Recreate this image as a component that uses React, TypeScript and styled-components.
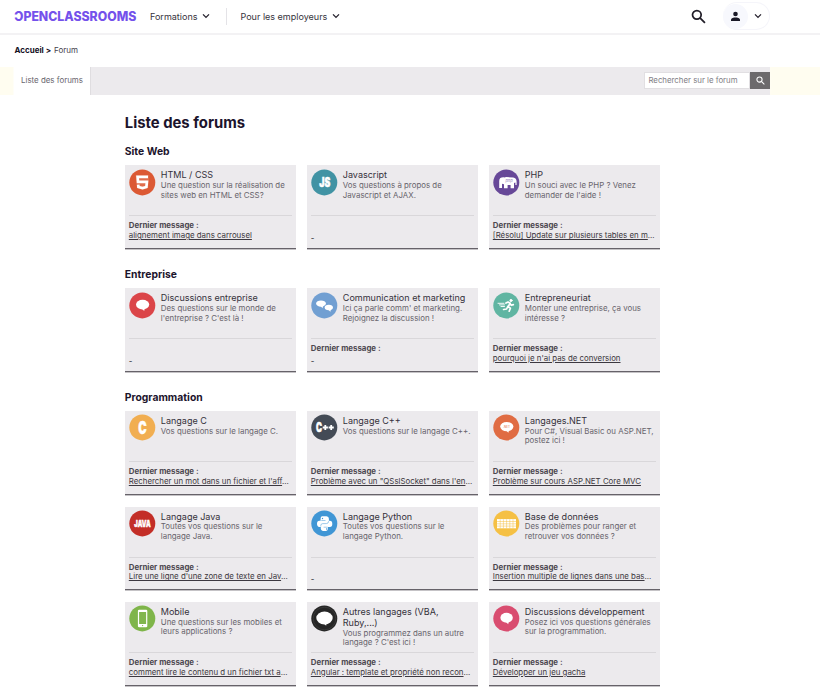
import React from "react";
import styled, { createGlobalStyle } from "styled-components";

const GlobalStyle = createGlobalStyle`
  * { box-sizing: border-box; }
  body { margin: 0; background: #fff; font-family: Inter, "Liberation Sans", sans-serif; color: #35313d; }
  h1, h2, h3, p { margin: 0; }
`;

const Page = styled.div`
  width: 820px;
  height: 699px;
  overflow: hidden;
`;

const Header = styled.header`
  display: flex;
  align-items: center;
  height: 35px;
  padding: 0 50px 1px 14px;
  border-bottom: 2px solid #f3f2f4;
`;

const NavItem = styled.div`
  display: flex;
  align-items: center;
  gap: 4.5px;
  font-size: 9.02px;
  line-height: 15px;
  color: #36333c;
  white-space: nowrap;
`;

const Divider = styled.span`
  width: 1px;
  height: 17px;
  margin: 0 13.5px 0 16px;
  background: #e4e3e7;
`;

const Logo = styled.svg`
  width: 123px;
  height: 18px;
  margin-right: 13px;
  flex: none;
  overflow: visible;
`;

const HeaderActions = styled.div`
  display: flex;
  align-items: center;
  gap: 17px;
  margin-left: auto;
`;

const Account = styled.div`
  display: flex;
  align-items: center;
  gap: 6px;
  width: 47px;
  height: 28px;
  border: 1px solid #f5f5fa;
  border-left: 0;
  border-radius: 14px;
`;

const Avatar = styled.span`
  display: flex;
  align-items: center;
  justify-content: center;
  width: 25px;
  height: 25px;
  border-radius: 50%;
  background: #f7f8fd;
`;

const Breadcrumb = styled.nav`
  display: flex;
  gap: 3px;
  height: 31.5px;
  padding: 9px 0 0 14.5px;
  font-size: 8px;
  line-height: 13px;
  color: #45414c;
  b { color: #15101f; font-weight: 700; }
`;

const Strip = styled.div`
  display: flex;
  height: 28.5px;
  padding: 0 50px 0 13px;
  background: linear-gradient(90deg, #fffdf0 13px, #fff 14px, #fff 760px, #fffdf0 772px);
`;

const ForumTab = styled.div`
  display: flex;
  align-items: center;
  width: 76.5px;
  padding: 0 0 2px 8px;
  font-size: 7.92px;
  color: #69656e;
  white-space: nowrap;
`;

const SearchBar = styled.div`
  display: flex;
  flex: 1;
  align-items: center;
  justify-content: flex-end;
  background: #eceaed;
  border-left: 1px solid #dfdde0;
`;

const SearchInput = styled.div`
  width: 106px;
  height: 17px;
  padding-left: 3.4px;
  border: 1px solid #e1dfe2;
  background: #fff;
  font-size: 7.83px;
  line-height: 15px;
  color: #817e85;
`;

const SearchButton = styled.div`
  display: flex;
  align-items: center;
  justify-content: center;
  width: 20px;
  height: 17px;
  background: #6c6a6c;
`;

const Content = styled.main`
  width: 536px;
  margin-left: 124.8px;
  padding-top: 18.6px;
`;

const PageTitle = styled.h1`
  height: 27.5px;
  font-size: 14.85px;
  line-height: 19px;
  font-weight: 700;
  color: #1c142c;
`;

const Section = styled.section`
  padding-top: 4px;
  margin-bottom: 14.9px;
`;

const SectionTitle = styled.h2`
  height: 20.4px;
  font-size: 10.35px;
  line-height: 13px;
  font-weight: 700;
  color: #1c142c;
`;

const Cards = styled.div`
  display: grid;
  grid-template-columns: repeat(3, 171px);
  column-gap: 11px;
  row-gap: 12px;
`;

const Card = styled.article`
  height: 83.5px;
  padding: 4px 4px 0;
  display: flex;
  flex-direction: column;
  background: #eceaed;
  border-bottom: 1.5px solid #666269;
  box-shadow: 0 0.5px 0 #8b888d;
`;

const CardTop = styled.div`
  display: flex;
  gap: 5px;
  height: 47px;
  border-bottom: 1px solid #d9d7da;
`;

const CardText = styled.div`
  padding-top: 1px;
  white-space: nowrap;
`;

const CardTitle = styled.h3`
  font-size: 9.02px;
  line-height: 10.8px;
  font-weight: 400;
  color: #35313b;
`;

const Description = styled.p`
  font-size: 7.88px;
  line-height: 9.6px;
  color: #68646c;
`;

const Latest = styled.div<{ $labelled: boolean }>`
  padding-top: ${(p) => (p.$labelled ? "5px" : "14.6px")};
  font-size: 7.87px;
  line-height: 9.7px;
  white-space: nowrap;
  color: #3c3840;
`;

const LatestLabel = styled.div`
  font-weight: 700;
  color: #4c4850;
`;

const Topic = styled.span`
  text-decoration: underline;
  text-underline-offset: 1px;
`;

const NoTopic = styled.div`
  padding-top: 3px;
  color: #17131d;
`;

const Badge = styled.svg`
  width: 27px;
  height: 27px;
  margin-top: -0.6px;
  flex: none;
  overflow: visible;
`;

const Chevron = () => (
  <svg width="8" height="6" viewBox="0 0 8 6" fill="none" stroke="#24202c" strokeWidth="1.3">
    <path d="M1 1.4 4 4.4 7 1.4" />
  </svg>
);

const Magnifier = ({ size, color }: { size: number; color: string }) => (
  <svg width={size} height={size} viewBox="0 0 18 18" fill="none" stroke={color} strokeWidth="2.1">
    <circle cx="7" cy="7" r="5.2" />
    <path d="m10.7 10.7 6 6" />
  </svg>
);

type Kind =
  | "html" | "js" | "php" | "bubble" | "bubbles" | "runner" | "c" | "cpp"
  | "net" | "java" | "python" | "table" | "phone" | "largeBubble" | "smallBubble";

const Lettering = ({ text, x, width, size, y }: { text: string; x: number; width: number; size: number; y: number }) => (
  <text x={x} y={y} fill="#fff" stroke="#fff" strokeWidth=".5" fontSize={size} fontWeight="900" textLength={width} lengthAdjust="spacingAndGlyphs">
    {text}
  </text>
);

const Bubble = ({ cx, cy, rx, ry }: { cx: number; cy: number; rx: number; ry: number }) => (
  <g fill="#fff">
    <ellipse cx={cx} cy={cy} rx={rx} ry={ry} />
    <path d={`M${cx - 0.4} ${cy + ry - 0.6}l2 2 .5-2.6z`} />
  </g>
);

const glyphs: Record<Kind, React.ReactNode> = {
  html: (
    <g>
      <path d="m6.6 6 1.2 13 5.7 2.1 5.7-2.1L20.4 6z" fill="#fff" opacity=".12" />
      <path d="M19 7.8H8.6l.4 5h8.9l-.5 5.2-3.9 1.1-4.1-1.1-.2-2.3" fill="none" stroke="#fff" strokeWidth="2.7" />
    </g>
  ),
  js: <Lettering text="JS" x={8.2} width={11} size={12.5} y={18} />,
  php: (
    <g>
      <path d="M6.2 19V12c0-2.9 2.2-3.9 5-3.6l2-.4 7 .5c2.2.2 3.4 1.8 3.4 4.2v3.2h-1.2v-2.4L21 14v5.2h-3.4V16h-3v3.2H11v-4l-2-.4V19z" fill="#fff" />
      <text x="12.4" y="13" fontSize="4" fontStyle="italic" fontWeight="500" fill="#a593c4">php</text>
    </g>
  ),
  bubble: <Bubble cx={13.6} cy={12.6} rx={6.6} ry={4.9} />,
  bubbles: (
    <g>
      <Bubble cx={10} cy={11.6} rx={4.9} ry={3.2} />
      <ellipse cx="17.8" cy="15.5" rx="4.8" ry="3.4" fill="#719fd2" />
      <Bubble cx={17.8} cy={15.5} rx={4.1} ry={2.8} />
    </g>
  ),
  runner: (
    <g stroke="#fff" fill="none" strokeLinecap="round" strokeLinejoin="round">
      <circle cx="18" cy="8.5" r="1.1" fill="#fff" />
      <path d="m13 11 2-1 2.2 1.2-2.1 3.5 2.3 1.5-1.2 3M14.8 14.5 13.6 17l-3 .5M16.9 11.6l1.4 1.7 2-.7" strokeWidth="1.7" />
      <path d="M5 11.3h6M6.5 12.9h5M8 14.5h3.5" strokeWidth=".9" />
    </g>
  ),
  c: <Lettering text="C" x={9.2} width={8.4} size={17} y={19.7} />,
  cpp: (
    <g>
      <Lettering text="C" x={5.1} width={6} size={12.5} y={18} />
      <path d="M11.7 13.5h5.2M14.3 10.9v5.2M17.6 13.5h5.2M20.2 10.9v5.2" stroke="#fff" strokeWidth="1.8" />
    </g>
  ),
  net: (
    <g>
      <Bubble cx={13.8} cy={12.6} rx={6.6} ry={4.7} />
      <text x="10" y="13.8" fontSize="3" fontWeight="600" fill="#e88d6e">.NET</text>
    </g>
  ),
  java: <Lettering text="JAVA" x={5.3} width={16.4} size={9.5} y={16.9} />,
  python: (
    <g>
      <path d="M11 6.3h4.5q2.4 0 2.4 2.5v2h1q2.4 0 2.4 3.1 0 3-2.4 3h-2v1.8q0 2.4-3.4 2.4t-3.7-2.3v-1.9H8.4Q6 16.9 6 13.8q0-3 2.4-3h1.2v-2Q9.6 6.5 11 6.3z" fill="#fff" />
      <path d="M10.3 10.5h4.2m-4.7 6v-1q0-1.9 2-1.9h3.6q2.2 0 2.2-2.4m-5 6h4" fill="none" stroke="#4096d5" strokeWidth=".5" />
      <circle cx="11.5" cy="8.5" r=".7" fill="#4096d5" /><circle cx="15.7" cy="19" r=".7" fill="#4096d5" />
    </g>
  ),
  table: (
    <g>
      <path d="M4 9.1h19v9.2H4z" fill="#fff" />
      <path d="M4 11.5h19M4 13.8h19M4 16.1h19M7.2 9.3v9M10.4 9.3v9M13.6 9.3v9M16.8 9.3v9M20 9.3v9" stroke="#f5c044" strokeWidth=".5" />
    </g>
  ),
  phone: (
    <g>
      <rect x="8.9" y="4.8" width="9.4" height="17.4" rx="1.2" fill="#fff" />
      <path d="M10.1 7h7v12h-7z" fill="#81b64d" />
      <circle cx="13.6" cy="20.6" r=".7" fill="#81b64d" />
    </g>
  ),
  largeBubble: (
    <g>
      <circle cx="13.5" cy="13.5" r="11.3" fill="none" stroke="#383838" strokeWidth="1" />
      <Bubble cx={13.5} cy={13} rx={8.2} ry={6.4} />
    </g>
  ),
  smallBubble: <Bubble cx={13.6} cy={12.8} rx={6.2} ry={5} />,
};

interface Forum {
  kind: Kind;
  color: string;
  title: string[];
  text: string[];
  topic?: string;
  cut?: boolean;
  labelled?: boolean;
}

const sections: { name: string; forums: Forum[] }[] = [
  {
    name: "Site Web",
    forums: [
      { kind: "html", color: "#dc5934", title: ["HTML / CSS"], text: ["Une question sur la réalisation de", "sites web en HTML et CSS?"], topic: "alignement image dans carrousel" },
      { kind: "js", color: "#4193a4", title: ["Javascript"], text: ["Vos questions à propos de", "Javascript et AJAX."] },
      { kind: "php", color: "#674898", title: ["PHP"], text: ["Un souci avec le PHP ? Venez", "demander de l'aide !"], topic: "[Résolu] Update sur plusieurs tables en m", cut: true },
    ],
  },
  {
    name: "Entreprise",
    forums: [
      { kind: "bubble", color: "#db4549", title: ["Discussions entreprise"], text: ["Des questions sur le monde de", "l'entreprise ? C'est là !"] },
      { kind: "bubbles", color: "#719fd2", title: ["Communication et marketing"], text: ["Ici ça parle comm' et marketing.", "Rejoignez la discussion !"], labelled: true },
      { kind: "runner", color: "#60b5a2", title: ["Entrepreneuriat"], text: ["Monter une entreprise, ça vous", "intéresse ?"], topic: "pourquoi je n'ai pas de conversion" },
    ],
  },
  {
    name: "Programmation",
    forums: [
      { kind: "c", color: "#f1ae51", title: ["Langage C"], text: ["Vos questions sur le langage C."], topic: "Rechercher un mot dans un fichier et l'aff", cut: true },
      { kind: "cpp", color: "#444b56", title: ["Langage C++"], text: ["Vos questions sur le langage C++."], topic: "Problème avec un \"QSslSocket\" dans l'en", cut: true },
      { kind: "net", color: "#e06c43", title: ["Langages.NET"], text: ["Pour C#, Visual Basic ou ASP.NET,", "postez ici !"], topic: "Problème sur cours ASP.NET Core MVC" },
      { kind: "java", color: "#c32e27", title: ["Langage Java"], text: ["Toutes vos questions sur le", "langage Java."], topic: "Lire une ligne d'une zone de texte en Jav", cut: true },
      { kind: "python", color: "#4096d5", title: ["Langage Python"], text: ["Toutes vos questions sur le", "langage Python."] },
      { kind: "table", color: "#f5c044", title: ["Base de données"], text: ["Des problèmes pour ranger et", "retrouver vos données ?"], topic: "Insertion multiple de lignes dans une bas", cut: true },
      { kind: "phone", color: "#7fb54a", title: ["Mobile"], text: ["Une questions sur les mobiles et", "leurs applications ?"], topic: "comment lire le contenu d un fichier txt a", cut: true },
      { kind: "largeBubble", color: "#262626", title: ["Autres langages (VBA,", "Ruby,...)"], text: ["Vous programmez dans un autre", "langage ? C'est ici !"], topic: "Angular : template et propriété non recon", cut: true },
      { kind: "smallBubble", color: "#d94d70", title: ["Discussions développement"], text: ["Posez ici vos questions générales", "sur la programmation."], topic: "Développer un jeu gacha" },
    ],
  },
];

const ForumCard = ({ forum }: { forum: Forum }) => {
  const labelled = Boolean(forum.topic || forum.labelled);
  return (
    <Card>
      <CardTop>
        <Badge viewBox="0 0 27 27">
          <circle cx="13.3" cy="13.4" r="13" fill={forum.color} />
          {glyphs[forum.kind]}
        </Badge>
        <CardText>
          {forum.title.map((line) => <CardTitle key={line}>{line}</CardTitle>)}
          {forum.text.map((line) => <Description key={line}>{line}</Description>)}
        </CardText>
      </CardTop>
      <Latest $labelled={labelled}>
        {labelled && <LatestLabel>Dernier message :</LatestLabel>}
        {forum.topic ? <Topic>{forum.topic}</Topic> : <NoTopic>-</NoTopic>}
        {forum.cut && "..."}
      </Latest>
    </Card>
  );
};

export default function App() {
  return (
    <Page>
      <GlobalStyle />
      <Header>
        <Logo viewBox="0 0 123 18">
          <text x="0.3" y="13.9" fontSize="12.6" fontWeight="800" fill="#7451eb" textLength="122" lengthAdjust="spacingAndGlyphs">ƆPENCLASSROOMS</text>
        </Logo>
        <NavItem>Formations <Chevron /></NavItem>
        <Divider />
        <NavItem>Pour les employeurs <Chevron /></NavItem>
        <HeaderActions>
          <Magnifier size={15} color="#211e28" />
          <Account>
            <Avatar>
              <svg width="11" height="11" viewBox="0 0 11 11" fill="#191927">
                <circle cx="5.5" cy="3" r="2.3" />
                <path d="M1 10V8.7C1 7 3.8 6.4 5.5 6.4S10 7 10 8.7V10z" />
              </svg>
            </Avatar>
            <Chevron />
          </Account>
        </HeaderActions>
      </Header>
      <Breadcrumb><b>Accueil &gt;</b><span>Forum</span></Breadcrumb>
      <Strip>
        <ForumTab>Liste des forums</ForumTab>
        <SearchBar>
          <SearchInput>Rechercher sur le forum</SearchInput>
          <SearchButton><Magnifier size={9} color="#fff" /></SearchButton>
        </SearchBar>
      </Strip>
      <Content>
        <PageTitle>Liste des forums</PageTitle>
        {sections.map((section) => (
          <Section key={section.name}>
            <SectionTitle>{section.name}</SectionTitle>
            <Cards>
              {section.forums.map((forum) => <ForumCard key={forum.kind} forum={forum} />)}
            </Cards>
          </Section>
        ))}
      </Content>
    </Page>
  );
}
